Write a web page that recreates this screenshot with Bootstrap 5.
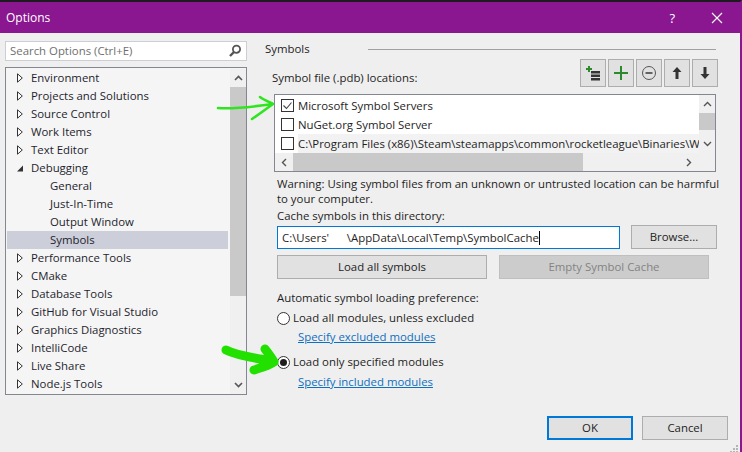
<!DOCTYPE html>
<html lang="en">
<head>
  <meta charset="UTF-8" />
  <title>Options</title>
  <link href="https://cdn.jsdelivr.net/npm/bootstrap@5.3.0/dist/css/bootstrap.min.css" rel="stylesheet" />
  <style>
    html, body { height: 100%; }
    body { background: #efefef; color: #1e1e1e; font-family: "Open Sans", "Liberation Sans", sans-serif; font-size: 11.4px; line-height: 16px; overflow: hidden; }
    .dlg { width: 742px; height: 452px; border-top: 2px solid #1f1a22; border-right: 2px solid #8a178f; position: relative; overflow: hidden; }
    .dlg-title { height: 31px; background: #8a178f; color: #fff; padding: 0 17px 0 6px; font-size: 12px; }
    .dlg-title svg { display: block; }
    .help-mark { font-size: 13px; margin-right: 36px; }
    .dlg-main { padding: 8px 0 0 5px; }
    .left-col { width: 242px; }
    .search-box { height: 20px; background: #fff; border: 1px solid #ccced6; padding: 0 4px; color: #6f6f6f; }
    .tree-box { height: 328px; margin-top: 6px; background: #f5f5f5; border: 1px solid #828790; padding-top: 1px; }
    .tree-list { width: 222px; padding-left: 1px; }
    .tree-row { height: 18px; line-height: 18px; padding-left: 10px; color: #1e1e2e; white-space: nowrap; }
    .tree-row svg { width: 6px; height: 10px; flex: none; margin-right: 8px; }
    .tree-sub { padding-left: 43px; }
    .tree-sel { background: #ccced9; }
    .vscroll { width: 16px; background: #f0f0f0; }
    .vscroll .thumb { background: #c9c9c9; }
    .arrow-cell { height: 18px; }
    .right-col { width: 453px; margin-left: 18px; }
    .sym-title { height: 16px; }
    .sym-title hr { width: 348px; margin: 0 2px 0 auto; border-top: 1px solid #a0a0a0; opacity: 1; }
    .tool-row { height: 28px; margin-top: 2px; padding-left: 7px; }
    .tool-lbl { padding-top: 9px; }
    .tool-btn { width: 26px; height: 28px; background: #e1e1e1; border: 1px solid #adadad; border-radius: 0; padding: 0; margin-left: 2px; }
    .loc-box { height: 78px; margin-top: 7px; margin-left: 9px; border: 1px solid #828790; background: #fff; width: 442px; }
    .loc-top { height: 58px; }
    .loc-rows { width: 0; padding-top: 1px; }
    .loc-row { height: 19px; padding-left: 6px; white-space: nowrap; overflow: hidden; }
    .cb { width: 13px; height: 13px; border: 1px solid #333; background: #fff; flex: none; margin-right: 4px; }
    .loc-hl { background: #f2f2f2; flex: 1; height: 19px; line-height: 19px; overflow: hidden; }
    .loc-thumb { height: 17px; }
    .hscroll { height: 18px; background: #f0f0f0; }
    .hscroll .thumb { width: 290px; background: #c9c9c9; }
    .arrow-h { width: 18px; }
    .arrow-end { margin-right: 17px; }
    .warn { margin: 4px 0 0 12px; width: 446px; line-height: 15px; }
    .cache-lbl { margin: 2px 0 0 12px; }
    .cache-row { margin: 1px 0 0 12px; }
    .cache-input { width: 343px; height: 23px; border: 1px solid #0078d7; background: #fff; border-radius: 0; padding: 0 4px; line-height: 21px; white-space: pre; margin-top: 1px; flex: none; }
    .caret-bar { display: inline-block; width: 1px; height: 14px; background: #000; vertical-align: -3px; }
    .win-btn { background: #e1e1e1; border: 1px solid #adadad; border-radius: 0; color: #1e1e1e; font-size: 11.4px; line-height: 16px; padding: 0; height: 24px; flex: none; }
    .win-btn:disabled { background: #cccccc; border-color: #bfbfbf; color: #838383; opacity: 1; }
    .win-default { border: 2px solid #0078d7; }
    .browse-btn { width: 86px; margin-left: 11px; }
    .load-row { margin: 6px 0 0 12px; }
    .load-btn { width: 210px; margin-right: 12px; }
    .auto-lbl { margin: 11px 0 0 12px; }
    .radio-row { margin: 4px 0 0 12px; height: 16px; }
    .radio-row2 { margin-top: 9px; }
    .radio-dot { width: 13px; height: 13px; border: 1px solid #333; border-radius: 50%; background: #fff; flex: none; margin-right: 3px; position: relative; }
    .radio-on::after { content: ""; position: absolute; left: 2px; top: 2px; width: 7px; height: 7px; border-radius: 50%; background: #1e1e1e; }
    .spec-link { display: block; margin: 3px 0 0 33px; color: #0e70c0; text-decoration: underline; }
    .spec-link2 { margin-top: 4px; }
    .foot-row { position: absolute; left: 547px; top: 414px; }
    .foot-btn { width: 86px; margin-right: 9px; }
    .ink { position: absolute; left: 0; top: 0; pointer-events: none; }
  </style>
</head>
<body>
  <div class="dlg">
    <div class="dlg-title d-flex align-items-center">
      <span class="flex-grow-1">Options</span>
      <span class="help-mark">?</span>
      <svg width="12" height="12" viewBox="0 0 12 12"><path d="M1 1l10 10M11 1L1 11" stroke="#fff" stroke-width="1.1" fill="none"/></svg>
    </div>
    <div class="dlg-main d-flex">
      <div class="left-col">
        <div class="search-box d-flex align-items-center justify-content-between">
          <span>Search Options (Ctrl+E)</span>
          <svg width="14" height="14" viewBox="0 0 14 14"><circle cx="8.5" cy="5.2" r="3.6" fill="none" stroke="#555" stroke-width="1.8"/><path d="M6 8l-4 4" stroke="#555" stroke-width="2.4"/></svg>
        </div>
        <div class="tree-box d-flex justify-content-between">
          <div class="tree-list" id="tree"></div>
          <div class="vscroll d-flex flex-column">
            <div class="arrow-cell d-flex align-items-center justify-content-center"><svg width="9" height="6" viewBox="0 0 9 6"><path d="M1 5l3.5-3.5L8 5" fill="none" stroke="#555" stroke-width="1.6"/></svg></div>
            <div class="thumb" style="height:209px"></div>
            <div class="flex-grow-1"></div>
            <div class="arrow-cell d-flex align-items-center justify-content-center"><svg width="9" height="6" viewBox="0 0 9 6"><path d="M1 1l3.5 3.5L8 1" fill="none" stroke="#555" stroke-width="1.6"/></svg></div>
          </div>
        </div>
      </div>
      <div class="right-col">
        <div class="sym-title d-flex align-items-center"><span>Symbols</span><hr class="flex-shrink-0" /></div>
        <div class="tool-row d-flex align-items-center">
          <span class="flex-grow-1 tool-lbl">Symbol file (.pdb) locations:</span>
          <button class="tool-btn d-flex align-items-center justify-content-center"><svg width="16" height="16" viewBox="0 0 16 16"><path d="M4 1v6M1 4h6" stroke="#2b8a2b" stroke-width="2"/><path d="M6 6h9v2.500H6zM6 9.500h9V12H6zM6 13h9v2.500H6z" fill="#333"/></svg></button>
          <button class="tool-btn d-flex align-items-center justify-content-center"><svg width="16" height="16" viewBox="0 0 16 16"><path d="M8 1v14M1 8h14" stroke="#2b8a2b" stroke-width="2"/></svg></button>
          <button class="tool-btn d-flex align-items-center justify-content-center"><svg width="16" height="16" viewBox="0 0 16 16"><circle cx="8" cy="8" r="6.500" fill="none" stroke="#555"/><path d="M4.500 8h7" stroke="#444" stroke-width="1.600"/></svg></button>
          <button class="tool-btn d-flex align-items-center justify-content-center"><svg width="12" height="14" viewBox="0 0 12 14"><path d="M6 1l4.500 5H7.500v7h-3V6H1.500z" fill="#333"/></svg></button>
          <button class="tool-btn d-flex align-items-center justify-content-center"><svg width="12" height="14" viewBox="0 0 12 14"><path d="M6 13l4.500-5H7.500V1h-3v7H1.500z" fill="#333"/></svg></button>
        </div>
        <div class="loc-box d-flex flex-column">
          <div class="loc-top d-flex">
            <div class="loc-rows flex-grow-1 overflow-hidden">
              <div class="loc-row d-flex align-items-center"><span class="cb d-flex align-items-center justify-content-center"><svg width="11" height="11" viewBox="0 0 11 11"><path d="M1.500 5.500l3 3 5-6" fill="none" stroke="#444" stroke-width="1.100"/></svg></span>Microsoft Symbol Servers</div>
              <div class="loc-row d-flex align-items-center"><span class="cb"></span>NuGet.org Symbol Server</div>
              <div class="loc-row d-flex align-items-center"><span class="cb"></span><span class="loc-hl">C:\Program Files (x86)\Steam\steamapps\common\rocketleague\Binaries\Win64</span></div>
            </div>
            <div class="vscroll d-flex flex-column">
              <div class="arrow-cell d-flex align-items-center justify-content-center"><svg width="9" height="6" viewBox="0 0 9 6"><path d="M1 5l3.500-3.500L8 5" fill="none" stroke="#555" stroke-width="1.400"/></svg></div>
              <div class="thumb loc-thumb"></div>
              <div class="flex-grow-1"></div>
              <div class="arrow-cell d-flex align-items-center justify-content-center"><svg width="9" height="6" viewBox="0 0 9 6"><path d="M1 1l3.500 3.500L8 1" fill="none" stroke="#555" stroke-width="1.400"/></svg></div>
            </div>
          </div>
          <div class="hscroll d-flex">
            <div class="arrow-cell arrow-h d-flex align-items-center justify-content-center"><svg width="6" height="9" viewBox="0 0 6 9"><path d="M5 1L1.500 4.500 5 8" fill="none" stroke="#555" stroke-width="1.400"/></svg></div>
            <div class="thumb"></div>
            <div class="flex-grow-1"></div>
            <div class="arrow-cell arrow-h arrow-end d-flex align-items-center justify-content-center"><svg width="6" height="9" viewBox="0 0 6 9"><path d="M1 1l3.500 3.500L1 8" fill="none" stroke="#555" stroke-width="1.400"/></svg></div>
          </div>
        </div>
        <div class="warn">Warning: Using symbol files from an unknown or untrusted location can be harmful to your computer.</div>
        <div class="cache-lbl">Cache symbols in this directory:</div>
        <div class="cache-row d-flex">
          <div class="cache-input">C:\Users'      \AppData\Local\Temp\SymbolCache<span class="caret-bar"></span></div>
          <button class="btn win-btn browse-btn">Browse...</button>
        </div>
        <div class="load-row d-flex">
          <button class="btn win-btn load-btn">Load all symbols</button>
          <button class="btn win-btn load-btn" disabled>Empty Symbol Cache</button>
        </div>
        <div class="auto-lbl">Automatic symbol loading preference:</div>
        <div class="radio-row d-flex align-items-center"><span class="radio-dot"></span>Load all modules, unless excluded</div>
        <a class="spec-link" href="#">Specify excluded modules</a>
        <div class="radio-row radio-row2 d-flex align-items-center"><span class="radio-dot radio-on"></span>Load only specified modules</div>
        <a class="spec-link spec-link2" href="#">Specify included modules</a>
      </div>
    </div>
    <div class="foot-row d-flex">
      <button class="btn win-btn win-default foot-btn">OK</button>
      <button class="btn win-btn foot-btn">Cancel</button>
    </div>
    <svg class="ink" width="742" height="452" viewBox="0 2 742 452">
      <path d="M218 108C235 109 252 107 273 104M260 97C264 100 269 102 273 104C266 109 258 115 252 119" fill="none" stroke="#2ee51f" stroke-width="2.600" stroke-linecap="round" stroke-linejoin="round"/>
      <path d="M226 350C238 356 255 358 272 361M265 349C269 354 272 358 274 362C268 366 260 368 254 370" fill="none" stroke="#22e000" stroke-width="9" stroke-linecap="round" stroke-linejoin="round"/>
      <path d="M736 445h2v2h-2zM733 448h2v2h-2zM736 448h2v2h-2zM730 451h2v2h-2zM733 451h2v2h-2zM736 451h2v2h-2z" fill="#b4b4b4"/>
    </svg>
  </div>
  <script src="https://cdn.jsdelivr.net/npm/bootstrap@5.3.0/dist/js/bootstrap.bundle.min.js"></script>
  <script>
    const rows = [["Environment",0],["Projects and Solutions",0],["Source Control",0],["Work Items",0],["Text Editor",0],["Debugging",1],["General",2],["Just-In-Time",2],["Output Window",2],["Symbols",3],["Performance Tools",0],["CMake",0],["Database Tools",0],["GitHub for Visual Studio",0],["Graphics Diagnostics",0],["IntelliCode",0],["Live Share",0],["Node.js Tools",0]];
    const closed = '<svg viewBox="0 0 6 10"><path d="M.5 .8L5.300 5 .5 9.200z" fill="#fff" stroke="#333"/></svg>';
    const open = '<svg viewBox="0 0 6 10"><path d="M0 8.500L6 2.500V8.500z" fill="#333"/></svg>';
    document.getElementById("tree").innerHTML = rows.map(function (r) {
      if (r[1] >= 2) return '<div class="tree-row tree-sub' + (r[1] === 3 ? ' tree-sel' : '') + '">' + r[0] + '</div>';
      return '<div class="tree-row d-flex align-items-center">' + (r[1] === 1 ? open : closed) + r[0] + '</div>';
    }).join("");
  </script>
</body>
</html>
